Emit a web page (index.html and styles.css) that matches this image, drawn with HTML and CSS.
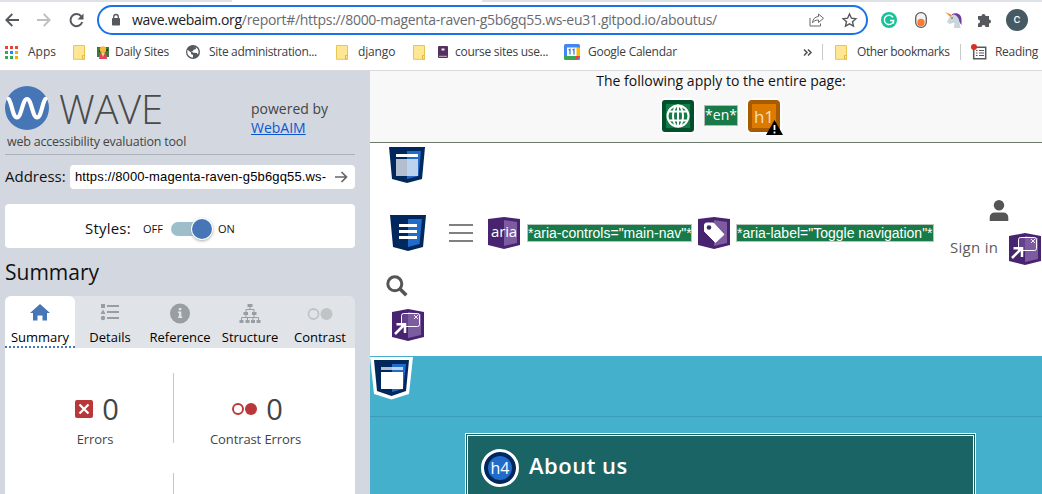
FILE: index.html
```html
<!DOCTYPE html>
<html lang="en">
<head>
<meta charset="utf-8">
<title>WAVE Web Accessibility Evaluation Tool</title>
<link rel="stylesheet" href="styles.css">
</head>
<body>
<svg class="defs" width="0" height="0">
  <defs>
    <symbol id="folder" viewBox="0 0 12 15"><path d="M.5.5h11v10h0v3.800H.5z" fill="#ffe694" stroke="#e8c64f"/><path d="M9.500 14v-3.500h2.300V14z" fill="#ffe694" stroke="#e0b93a"/></symbol>
    <symbol id="popup" viewBox="0 0 32 32"><path d="M0 3L16 0l16 3v25l-16 4-16-4z" fill="#482470"/><path d="M16 3l13 2v21l-13 3z" fill="#7c5ba0"/><rect x="9.500" y="4.500" width="18" height="13" rx="2" fill="#7c5ba0" fill-opacity=".55" stroke="#fff"/><path d="M22 6l4 4M26 6l-4 4" stroke="#fff" stroke-width=".9"/><path d="M3 25L12 16M4.500 15.300H13V24" fill="none" stroke="#fff" stroke-width="2.500"/></symbol>
  </defs>
</svg>
<header class="browser">
  <div class="tabstrip"><span class="tabstrip-active"></span></div>
  <div class="toolbar">
    <svg class="back" width="14" height="14" viewBox="0 0 14 14" fill="none" stroke="#55595e" stroke-width="1.800"><path d="M14 7H1.500M7.300 1L1.300 7l6 6"/></svg>
    <svg class="forward" width="14" height="14" viewBox="0 0 14 14" fill="none" stroke="#bdbfc2" stroke-width="1.800"><path d="M0 7h12.500M6.700 1l6 6-6 6"/></svg>
    <svg class="reload" width="15" height="15" viewBox="0 0 15 15"><path d="M12.300 3.500A6 6 0 1 0 13.200 9" fill="none" stroke="#55595e" stroke-width="2"/><path d="M14.500.5V6.500H8.500z" fill="#55595e"/></svg>
    <div class="omnibox">
      <svg class="lock" width="8" height="12" viewBox="0 0 8 12"><rect y="4" width="8" height="7.500" rx=".8" fill="#55595e"/><path d="M1.700 5V2.800a2.300 2.300 0 0 1 4.600 0V5" fill="none" stroke="#55595e" stroke-width="1.300"/></svg>
      <span class="url"><b>wave.webaim.org</b>/report#/https://8000-magenta-raven-g5b6gq55.ws-eu31.gitpod.io/aboutus/</span>
      <svg class="share" width="16" height="14" viewBox="0 0 16 14" fill="none" stroke="#65686d"><path d="M1 5v8h10.500v-2.500"/><path d="M9.500 1l5 4.300-5 4.200V7C6.500 7 4.700 8 3.500 9.800 3.900 6 6 3.800 9.500 3.500z"/></svg>
      <svg class="star" width="15" height="14" viewBox="0 0 15 14"><path d="M7.500 1l1.900 4.200 4.500.5-3.400 3 1 4.400-4-2.300-4 2.300 1-4.400-3.400-3 4.500-.5z" fill="none" stroke="#55595e" stroke-width="1.400"/></svg>
    </div>
    <svg class="grammarly" width="16" height="16" viewBox="0 0 16 16"><circle cx="8" cy="8" r="8" fill="#15c39a"/><path d="M12 5.300A4.700 4.700 0 1 0 12.700 8.500H9" fill="none" stroke="#fff" stroke-width="1.500"/><path d="M12.500 8.500v3.200" stroke="#fff" stroke-width="1.300"/></svg>
    <svg class="pill" width="12" height="16" viewBox="0 0 12 16"><rect x=".7" y=".7" width="10.600" height="14.600" rx="5" fill="#f2f2f2" stroke="#5e5e5e" stroke-width="1.300"/><circle cx="6" cy="10.500" r="3.700" fill="#ff7a2f"/></svg>
    <svg class="unicorn" width="17" height="16" viewBox="0 0 17 16"><path d="M7 2c5-2 9 0 9.500 5v6L12 7 7 4z" fill="#6c3c9c"/><path d="M5 4l3-1.500C12 3 14 6 14.500 10l1 6H9l.5-5.500-5 1.500L2 10z" fill="#cbd5dc"/><path d="M0 0l7 3-1.500 2z" fill="#f08a32"/><circle cx="7" cy="6" r=".7" fill="#333"/></svg>
    <svg class="puzzle" width="15" height="15" viewBox="0 0 15 15"><path d="M1 3h3.500a2 2 0 1 1 4 0H12v3.500a2 2 0 1 1 0 4V14H8.500a2 2 0 0 0-4 0H1v-3.500a2 2 0 0 0 0-4z" fill="#55595e"/></svg>
    <span class="avatar">c</span>
  </div>
  <nav class="bookmarks">
    <svg class="apps" width="13" height="13" viewBox="0 0 13 13"><path d="M0 0h3v3H0zM5 0h3v3H5zM10 0h3v3h-3z" fill="#ea4335"/><path d="M0 5h3v3H0zM0 10h3v3H0zM5 10h3v3H5z" fill="#34a853"/><path d="M5 5h3v3H5z" fill="#1a8cff"/><path d="M10 5h3v3h-3zM10 10h3v3h-3z" fill="#fbaa05"/></svg>
    <span class="t-apps">Apps</span>
    <svg class="f1" width="12" height="15"><use href="#folder"/></svg>
    <svg class="person" width="12" height="13" viewBox="0 0 12 13"><path d="M0 1h12v10H0z" fill="#3c7a3b"/><path d="M2 4h2v2H2zM8 3h3v2H8z" fill="#4c2c20"/><circle cx="6" cy="3.500" r="3.200" fill="#f6b93c"/><path d="M2 13l1-6h6l1 6z" fill="#e5425e"/><path d="M4 6.500h4L6 11z" fill="#ffd36a"/></svg>
    <span class="t-daily">Daily Sites</span>
    <svg class="globe" width="14" height="14" viewBox="0 0 14 14"><circle cx="7" cy="7" r="7" fill="#55595e"/><path d="M1.500 4.800L5 7.500v1.400l2 1v2.600C4 12.500 1.300 10 1.300 7zM7 1.500l3.500 1-1 1.800-2 .4-.5 1.500H5l2.500 1.500L11 8l.5 1.500 1-1.500C12.700 6 12 4 10.500 2.800" fill="#fff"/></svg>
    <span class="t-site">Site administration...</span>
    <svg class="f2" width="12" height="15"><use href="#folder"/></svg>
    <span class="t-django">django</span>
    <svg class="f3" width="12" height="15"><use href="#folder"/></svg>
    <svg class="book" width="10" height="12" viewBox="0 0 10 12"><rect width="10" height="12" rx="1" fill="#54315f"/><path d="M3.500 2.500h3v2h-3z" fill="#eee"/><path d="M1 10.300h8" stroke="#c9b7cf"/></svg>
    <span class="t-course">course sites use...</span>
    <svg class="cal" width="16" height="16" viewBox="0 0 16 16"><rect width="16" height="16" rx="1.500" fill="#4285f4"/><path d="M12 3.500h4V12h-4z" fill="#fbbc04"/><path d="M0 12h12v4H1.500L0 14.500z" fill="#34a853"/><path d="M12 16v-4h4z" fill="#ea4335"/><path d="M3 3.500h9.500V12H3z" fill="#fff"/><path d="M4.500 6l1.500-.8v5.300M8.500 6l1.500-.8v5.300" fill="none" stroke="#3573d9" stroke-width="1.200"/></svg>
    <span class="t-cal">Google Calendar</span>
    <svg class="more" width="9" height="7" viewBox="0 0 9 7" fill="none" stroke="#4c5055" stroke-width="1.500"><path d="M1 .5l3 3-3 3M5 .5l3 3-3 3"/></svg>
    <i class="sep s1"></i>
    <svg class="f4" width="12" height="15"><use href="#folder"/></svg>
    <span class="t-other">Other bookmarks</span>
    <i class="sep s2"></i>
    <svg class="list" width="16" height="16" viewBox="0 0 16 16"><path d="M2.700 3.200h12v11.500h-12z" fill="#fff" stroke="#55595e" stroke-width="1.500"/><path d="M5 6.500h1.500M8 6.500h5M5 9h1.500M8 9h5M5 11.500h1.500M8 11.500h5" stroke="#55595e" stroke-width="1.200"/><circle cx="3" cy="3" r="3" fill="#d93025"/></svg>
    <span class="t-read">Reading</span>
  </nav>
</header>
<div class="page">
  <aside class="sidebar">
    <div class="brand">
      <div class="logo">
        <svg width="44" height="44" viewBox="0 0 44 44"><circle cx="22" cy="22" r="22" fill="#4676b6"/><path d="M3.500 13c3 2 4 18.500 8.500 18.500S17.500 13 22 13s5.500 18.500 10 18.500S37.500 15 40.500 13" fill="none" stroke="#fff" stroke-width="4.200" stroke-linecap="round"/></svg>
        <h1>WAVE</h1>
      </div>
      <p class="tagline">web accessibility evaluation tool</p>
      <p class="powered">powered by<br><a href="#">WebAIM</a></p>
    </div>
    <div class="address">
      <label>Address:</label>
      <div class="field"><span>https://8000-magenta-raven-g5b6gq55.ws-</span><svg width="13" height="12" viewBox="0 0 13 12" fill="none" stroke="#666" stroke-width="1.700"><path d="M0 6h11.500M6.500 1l5 5-5 5"/></svg></div>
    </div>
    <div class="styles-box"><span class="styles-label">Styles:</span><span class="off">OFF</span><span class="track"><i></i></span><span class="on">ON</span></div>
    <h2>Summary</h2>
    <div class="tabs">
      <div class="tab active"><svg width="20" height="20" viewBox="0 0 20 20"><path d="M10 1l10 9h-3v7.500h-4.500v-5h-5v5H3V10H0z" fill="#4676b6"/></svg><span>Summary</span></div>
      <div class="tab"><svg width="20" height="20" viewBox="0 0 20 20" fill="#999ea2"><path d="M1 1h4v4H1zM3 6.500l2.500 4.500h-5z"/><circle cx="3" cy="15" r="2.200"/><path d="M7 2h12v2H7zM7 8h12v2H7zM7 14h12v2H7z"/></svg><span>Details</span></div>
      <div class="tab"><svg width="20" height="20" viewBox="0 0 20 20"><circle cx="10" cy="10.500" r="10" fill="#999ea2"/><path d="M8.800 5h2.500v2.300H8.800zM8 8.500h3.300v5h1V15H8v-1.500h1V10H8z" fill="#e0e4e8"/></svg><span>Reference</span></div>
      <div class="tab"><svg width="22" height="20" viewBox="0 0 22 20"><path d="M8.500 1h5v3h-5zM4.500 9h4.500v3H4.500zM13 9h4.500v3H13zM.5 17h4v3h-4zM6.500 17h4v3h-4zM12 17h4v3h-4zM17.500 17h4v3h-4z" fill="#999ea2"/><path d="M11 4v2.500M7 9V6.500h8V9M7 12v2.500M15 12v2.500M2.500 17v-2.500h17V17M8.500 14.500V17M14 14.500V17" fill="none" stroke="#999ea2"/></svg><span>Structure</span></div>
      <div class="tab"><svg width="26" height="20" viewBox="0 0 26 20"><circle cx="6.500" cy="11" r="5" fill="none" stroke="#c0c4c7" stroke-width="1.800"/><circle cx="19.500" cy="11" r="6" fill="#c0c4c7"/></svg><span>Contrast</span></div>
    </div>
    <div class="panel">
      <div class="stat">
        <div class="count"><svg width="18" height="18" viewBox="0 0 18 18"><rect width="18" height="18" rx="2" fill="#b93639"/><path d="M4.500 4.500l9 9M13.500 4.500l-9 9" stroke="#fff" stroke-width="2.300"/></svg><b>0</b></div>
        <p>Errors</p>
      </div>
      <div class="stat second">
        <div class="count"><svg width="25" height="12" viewBox="0 0 25 12"><circle cx="6" cy="6" r="5" fill="none" stroke="#b93639" stroke-width="1.900"/><circle cx="19" cy="6" r="6" fill="#b93639"/></svg><b>0</b></div>
        <p>Contrast Errors</p>
      </div>
      <div class="stat"></div><div class="stat second"></div>
    </div>
  </aside>
  <main class="report">
    <section class="notice">
      <p>The following apply to the entire page:</p>
      <div class="notice-icons">
        <svg class="halo" width="32" height="32" viewBox="0 0 32 32"><rect width="32" height="32" rx="3" fill="#00502c"/><path d="M4 4h24v24H4z" fill="#177a48"/><g fill="none" stroke="#fff" stroke-width="2"><circle cx="16" cy="16" r="10.500"/><ellipse cx="16" cy="16" rx="5" ry="10.500"/><path d="M16 5.500v21M7 11.500h18M7 20.500h18"/></g></svg>
        <span class="lang">*en*</span>
        <span class="h1-icon halo">h1<svg width="17" height="15" viewBox="0 0 17 15"><path d="M8.500 0L17 15H0z" fill="#000"/><path d="M8.500 5v5M8.500 11.500v2" stroke="#fff" stroke-width="1.800"/></svg></span>
      </div>
    </section>
    <section class="nav-area">
      <svg class="header-mark" width="36" height="36" viewBox="0 0 36 36"><path d="M0 0h36l-3 32-15 4-15-4z" fill="#00285c"/><path d="M18 4h14l-2.500 25L18 32z" fill="#216bcb"/><path d="M7 7h22v3H7z" fill="#fff"/><path d="M7 12h22v17H7z" fill="#fff" fill-opacity=".7"/></svg>
      <div class="nav-row">
        <svg class="nav-mark" width="36" height="36" viewBox="0 0 36 36"><path d="M0 0h36l-3 32-15 4-15-4z" fill="#00285c"/><path d="M18 4h14l-2.500 25L18 32z" fill="#216bcb"/><path d="M9 9h18v3H9zM9 15h18v3H9zM9 21h18v3H9z" fill="#fff"/></svg>
        <svg class="burger" width="24" height="18" viewBox="0 0 24 18"><path d="M0 0h24v2H0zM0 8h24v2H0zM0 16h24v2H0z" fill="#808080"/></svg>
        <span class="aria-icon"><svg width="32" height="32" viewBox="0 0 32 32"><path d="M0 2L16 0l16 2v26l-16 4-16-4z" fill="#482470"/><path d="M16 3l13 2v21l-13 3z" fill="#7c5ba0"/></svg><span>aria</span></span>
        <span class="label l1">*aria-controls="main-nav"*</span>
        <svg class="tag-icon" width="32" height="32" viewBox="0 0 32 32"><path d="M0 2L16 0l16 2v26l-16 4-16-4z" fill="#482470"/><path d="M16 3l13 2v21l-13 3z" fill="#7c5ba0"/><path d="M6.500 8q0-2 2-2h7L26 17.500l-8.500 8L6.500 14.500z" fill="#fff" stroke="#fff" stroke-linejoin="round"/><circle cx="11" cy="10.500" r="2.300" fill="#482470"/></svg>
        <span class="label l2">*aria-label="Toggle navigation"*</span>
        <div class="sign"><svg width="20" height="21" viewBox="0 0 20 21" fill="#555"><circle cx="10" cy="5.300" r="5.200"/><path d="M.7 21v-3q0-5.500 5.300-5.500h8q5.300 0 5.300 5.500v3z"/></svg><span>Sign in</span></div>
        <svg class="sign-popup" width="32" height="32"><use href="#popup"/></svg>
      </div>
      <svg class="search" width="22" height="22" viewBox="0 0 22 22" fill="none" stroke="#555"><circle cx="8.800" cy="8.800" r="7" stroke-width="3"/><path d="M13.800 13.800l6.500 6.500" stroke-width="3.500"/></svg>
      <svg class="search-popup" width="32" height="32"><use href="#popup"/></svg>
    </section>
    <section class="content">
      <div class="strip"><svg width="43" height="43" viewBox="0 0 43 43"><path d="M0 0h43l-4 37-17.500 5.500L4 37z" fill="#fff"/><path d="M4 3h35l-3 31-14.500 5L7 34z" fill="#00285c"/><path d="M22 7h14l-3 25-11 3z" fill="#216bcb"/><path d="M11 10h22v3H11z" fill="#fff" fill-opacity=".7"/><path d="M11 15h22v17H11z" fill="#fff"/></svg></div>
      <div class="about"><span class="h4-icon">h4</span><h3>About us</h3></div>
    </section>
  </main>
</div>
</body>
</html>
```
FILE: styles.css
```css
* { box-sizing: border-box; }
body { margin: 0; width: 1042px; height: 494px; overflow: hidden; background: #fff; font-family: "Open Sans", sans-serif; color: #111; }
svg { display: block; flex: none; overflow: visible; }
.defs { position: absolute; }
p, h1, h2, h3 { margin: 0; font-weight: 400; }
span { white-space: nowrap; }

.browser { height: 71px; border-bottom: 1px solid #d8d9dc; display: flex; flex-direction: column; }
.tabstrip { height: 2px; background: #dee1e6; flex: none; }
.tabstrip-active { display: block; width: 250px; height: 2px; margin-left: 232px; background: #fff; }
.toolbar { height: 36px; display: flex; align-items: center; padding-left: 5px; flex: none; }
.forward { margin-left: 18px; }
.reload { margin-left: 18px; }
.omnibox { width: 771px; height: 30px; margin-left: 13px; border: 2px solid #1a73e8; border-radius: 15px; display: flex; align-items: center; padding-left: 13px; flex: none; }
.url { width: 586px; margin-left: 12px; font: 14px/20px "Open Sans", sans-serif; letter-spacing: -.29px; color: #676b70; }
.url b { font-weight: 400; color: #202124; }
.share { margin-left: 91px; }
.star { margin-left: 17px; }
.grammarly { margin-left: 13px; }
.pill { margin-left: 18px; }
.unicorn { margin-left: 18px; }
.puzzle { margin-left: 15px; }
.avatar { width: 22px; height: 22px; border-radius: 50%; margin-left: 14px; background: #455a64; color: #fff; font: 13px/20px Roboto, sans-serif; text-align: center; flex: none; }

.bookmarks { height: 28px; display: flex; align-items: center; padding-left: 5px; font: 12px/16px "Open Sans", sans-serif; color: #3c4043; }
.bookmarks > * { flex: none; }
.t-apps { width: 27px; margin-left: 10px; }
.f1 { margin-left: 18px; }
.person { margin-left: 12px; }
.t-daily { width: 55px; margin-left: 6px; letter-spacing: -.28px; }
.globe { margin-left: 16px; }
.t-site { width: 108px; margin-left: 9px; letter-spacing: -.33px; }
.f2 { margin-left: 19px; }
.t-django { width: 37px; margin-left: 10px; letter-spacing: -.15px; }
.f3 { margin-left: 18px; }
.book { margin-left: 13px; }
.t-course { width: 93px; margin-left: 7px; letter-spacing: -.29px; }
.cal { margin-left: 16px; }
.t-cal { width: 89px; margin-left: 8px; letter-spacing: -.27px; }
.more { margin-left: 126px; }
.sep { width: 1px; height: 16px; background: #c8cacc; }
.s1 { margin-left: 10px; }
.f4 { margin-left: 12px; }
.t-other { width: 93px; margin-left: 10px; letter-spacing: -.4px; }
.s2 { margin-left: 10px; }
.list { margin-left: 10px; }
.t-read { margin-left: 8px; letter-spacing: -.3px; }

.page { display: flex; height: 423px; }
.sidebar { width: 370px; flex: none; background: #d3d8e0; padding: 0 15px 0 5px; }
.brand { height: 84px; border-bottom: 1px solid #adb2b8; display: grid; grid-template-columns: 246px 1fr; grid-template-rows: 62px 21px; }
.logo { display: flex; padding-top: 15px; }
.logo h1 { font: 300 40px/46px "Open Sans", sans-serif; letter-spacing: -.3px; color: #4a4a4a; margin-left: 10px; }
.tagline { grid-row: 2; font-size: 12.500px; line-height: 18px; letter-spacing: -.22px; color: #444; padding-left: 2px; white-space: nowrap; }
.powered { grid-column: 2; grid-row: 1 / 3; font-size: 14px; line-height: 19px; padding-top: 28px; color: #444; }
.powered a { color: #0b57d0; }
.address { display: flex; align-items: center; margin-top: 10px; height: 24px; font-size: 15px; }
.address label { width: 65px; line-height: 22px; padding-bottom: 2px; }
.field { flex: 1; height: 24px; background: #fff; border-radius: 4px; display: flex; align-items: center; padding-left: 5px; font: 13px/16px "Liberation Sans", sans-serif; letter-spacing: .14px; color: #000; }
.field span { width: 260px; }
.styles-box { height: 44px; margin-top: 15px; background: #fff; border-radius: 4px; display: flex; align-items: center; padding: 6px 0 0 80px; font-size: 15px; }
.styles-label { width: 58px; letter-spacing: .2px; padding-bottom: 2px; }
.off, .on { font-size: 11px; width: 28px; padding-bottom: 1px; }
.track { width: 41px; height: 14px; border-radius: 7px 0 0 7px; display: flex; align-items: center; justify-content: flex-end; background: linear-gradient(90deg, #9dbfc9 28px, transparent 28px); }
.track i { width: 20px; height: 20px; border-radius: 50%; background: #4676b6; box-shadow: 0 0 0 1px #fff, 0 1px 3px 1px #aaa; }
.on { margin-left: 6px; }
h2 { font-size: 21px; line-height: 30px; height: 48px; padding-top: 9px; }
.tabs { height: 52px; display: flex; background: #e0e4e8; border-radius: 6px 6px 0 0; }
.tab { width: 70px; flex: none; display: flex; flex-direction: column; align-items: center; padding-top: 7px; font-size: 13px; line-height: 18px; color: #000; }
.tab span { margin-top: 5px; }
.active { background: #fff; border-radius: 6px 6px 0 0; border-bottom: 2px dotted #4676b6; }
.panel { height: 146px; background: #fff; padding-top: 25px; display: grid; grid-template-columns: 168px 182px; grid-template-rows: 70px 70px; row-gap: 30px; overflow: hidden; }
.second { border-left: 1px solid #c6c6c6; padding-right: 18px; }
.stat { text-align: center; }
.stat:first-child { padding-left: 12px; }
.count { display: flex; align-items: center; justify-content: center; gap: 9px; height: 46px; padding: 25px 0 0 4px; }
.count b { font: 29px/34px "Open Sans", sans-serif; color: #444; }
.stat p { font-size: 13px; line-height: 18px; letter-spacing: -.1px; color: #444; margin-top: 11px; }

.report { flex: 1; min-width: 0; }
.notice { height: 72px; background: #f8f8f8; border-bottom: 1px solid #6d7b6c; font-size: 14px; line-height: 20px; text-align: center; }
.notice p { padding-left: 30px; }
.notice-icons { display: flex; align-items: center; margin: 9px 0 0 292px; }
.halo { border-radius: 4px; box-shadow: 0 0 0 2px #fff; }
.lang { width: 34px; height: 21px; margin: -2px 10px 0; border: 1px solid #b8b8b8; background: #177a48; color: #fff; line-height: 18px; }
.h1-icon { width: 32px; height: 32px; border: 4px solid #a85b00; background: #dc7a00; color: #f7dfbf; font-size: 17px; line-height: 26px; position: relative; }
.h1-icon svg { position: absolute; left: 14px; top: 16px; }

.nav-area { height: 213px; padding-top: 4px; }
.header-mark { margin-left: 19px; }
.nav-row { height: 92px; padding: 17px 0 0 20px; display: flex; align-items: flex-start; }
.nav-mark { margin-top: 15px; }
.burger { margin: 24px 0 0 23px; }
.aria-icon { display: grid; width: 32px; height: 32px; margin: 17px 0 0 15px; }
.aria-icon > * { grid-area: 1 / 1; }
.aria-icon span { font: 15px/29px "Open Sans", sans-serif; letter-spacing: -.2px; color: #fff; text-align: center; }
.label { height: 18px; border: 1px solid #b8c4bc; background: #177a48; color: #fff; font: 14px/17px "Liberation Sans", sans-serif; margin-top: 24px; flex: none; }
.l1 { width: 165px; margin-left: 7px; }
.tag-icon { margin: 17px 0 0 6px; }
.l2 { width: 198px; margin-left: 6px; }
.sign { width: 58px; margin-left: 16px; color: #5c5c5c; font: 15px/20px "Open Sans", sans-serif; }
.sign svg { margin-left: 39px; }
.sign span { display: block; margin-top: 16px; letter-spacing: .3px; }
.sign-popup { margin: 33px 0 0 1px; }
.search { margin-left: 16px; }
.search-popup { margin: 12px 0 0 22px; }

.content { height: 138px; background: #45b0cc; }
.strip { height: 61px; border-bottom: 1px solid #3c9cb8; padding-top: 1px; }
.about { width: 511px; height: 61px; margin: 16px 0 0 95px; border: 3px double #fff; border-bottom: 0; background: #1a6466; display: flex; padding: 13px 0 0 13px; }
.h4-icon { width: 38px; height: 38px; border-radius: 50%; border: 3px solid #fff; box-shadow: inset 0 0 0 4px #00285c; background: #216bcb; color: #fff; font-size: 16px; line-height: 32px; text-align: center; }
.about h3 { margin-left: 10px; font-size: 22px; font-weight: 600; letter-spacing: .5px; line-height: 32px; color: #fff; }
```
